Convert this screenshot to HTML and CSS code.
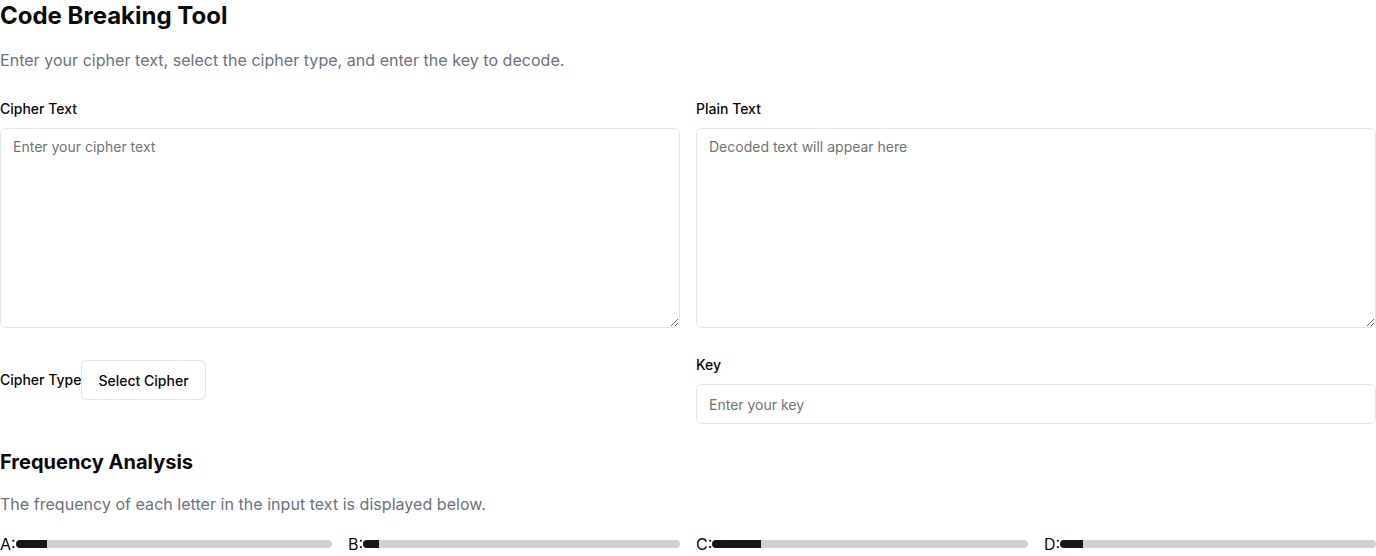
FILE: index.html
```html
<!DOCTYPE html>
<html lang="en">
<head>
<meta charset="utf-8">
<title>Code Breaking Tool</title>
<link rel="stylesheet" href="styles.css">
</head>
<body>
<main class="page">
  <h1 class="title">Code Breaking Tool</h1>
  <p class="desc">Enter your cipher text, select the cipher type, and enter the key to decode.</p>

  <div class="grid two">
    <div class="field">
      <label class="label" for="cipher">Cipher Text</label>
      <textarea id="cipher" class="area" placeholder="Enter your cipher text"></textarea>
    </div>
    <div class="field">
      <label class="label" for="plain">Plain Text</label>
      <textarea id="plain" class="area" placeholder="Decoded text will appear here" readonly></textarea>
    </div>
  </div>

  <div class="grid two row2">
    <div class="inline-field">
      <span class="label plain">Cipher Type</span>
      <button class="btn" type="button">Select Cipher</button>
    </div>
    <div class="field">
      <label class="label" for="key">Key</label>
      <input id="key" class="input" placeholder="Enter your key">
    </div>
  </div>

  <h2 class="subtitle">Frequency Analysis</h2>
  <p class="desc">The frequency of each letter in the input text is displayed below.</p>

  <div class="grid four">
    <div class="freq"><span class="letter">A:</span><div class="track"><div class="fill" style="width:10%"></div></div></div>
    <div class="freq"><span class="letter">B:</span><div class="track"><div class="fill" style="width:5%"></div></div></div>
    <div class="freq"><span class="letter">C:</span><div class="track"><div class="fill" style="width:15.3%"></div></div></div>
    <div class="freq"><span class="letter">D:</span><div class="track"><div class="fill" style="width:7.2%"></div></div></div>
  </div>
</main>
</body>
</html>
```

FILE: styles.css
```css
* { box-sizing: border-box; }
html, body { margin: 0; padding: 0; background: #ffffff; }
body {
  font-family: Inter, "Noto Sans", "Liberation Sans", sans-serif;
  color: #0a0a0a;
  overflow: hidden;
}
.page { padding: 0; }
.title {
  margin: 0;
  font-size: 24px;
  line-height: 32px;
  font-weight: 700;
}
.desc {
  margin: 16px 0 0;
  font-size: 16px;
  line-height: 24px;
  color: #6b7280;
  letter-spacing: 0.035px;
}
.grid { display: grid; gap: 16px; }
.two { grid-template-columns: 1fr 1fr; margin-top: 27px; }
.four { grid-template-columns: repeat(4, 1fr); margin-top: 16px; }
.field { display: flex; flex-direction: column; gap: 9px; }
.label {
  font-size: 14px;
  line-height: 20px;
  font-weight: 500;
  color: #0a0a0a;
}
.area {
  display: block;
  width: 100%;
  height: 200px;
  resize: vertical;
  border: 1px solid #e5e5e5;
  border-radius: 6px;
  padding: 8px 12px;
  font-family: inherit;
  font-size: 14px;
  line-height: 20px;
  color: #0a0a0a;
  background: #fff;
  outline: none;
}
.area::placeholder, .input::placeholder { color: #737373; }
.inline-field {
  display: flex;
  align-items: center;
  align-self: start;
  margin-top: 5px;
}
.btn {
  height: 40px;
  padding: 0 16px;
  border: 1px solid #e5e5e5;
  border-radius: 6px;
  background: #fff;
  font-family: inherit;
  font-size: 14px;
  font-weight: 500;
  color: #0a0a0a;
}
.input {
  display: block;
  width: 100%;
  height: 40px;
  border: 1px solid #e5e5e5;
  border-radius: 6px;
  padding: 0 12px;
  font-family: inherit;
  font-size: 14px;
  color: #0a0a0a;
  background: #fff;
  outline: none;
}
.subtitle {
  margin: 24px 0 0;
  font-size: 20px;
  line-height: 28px;
  font-weight: 700;
}
.freq { display: flex; align-items: center; height: 24px; }
.letter { font-size: 16px; line-height: 24px; color: #0a0a0a; }
.track {
  flex: 1;
  height: 8px;
  border-radius: 9999px;
  background: #d1d1d1;
  overflow: hidden;
}
.fill { height: 100%; background: #171717; }
```
